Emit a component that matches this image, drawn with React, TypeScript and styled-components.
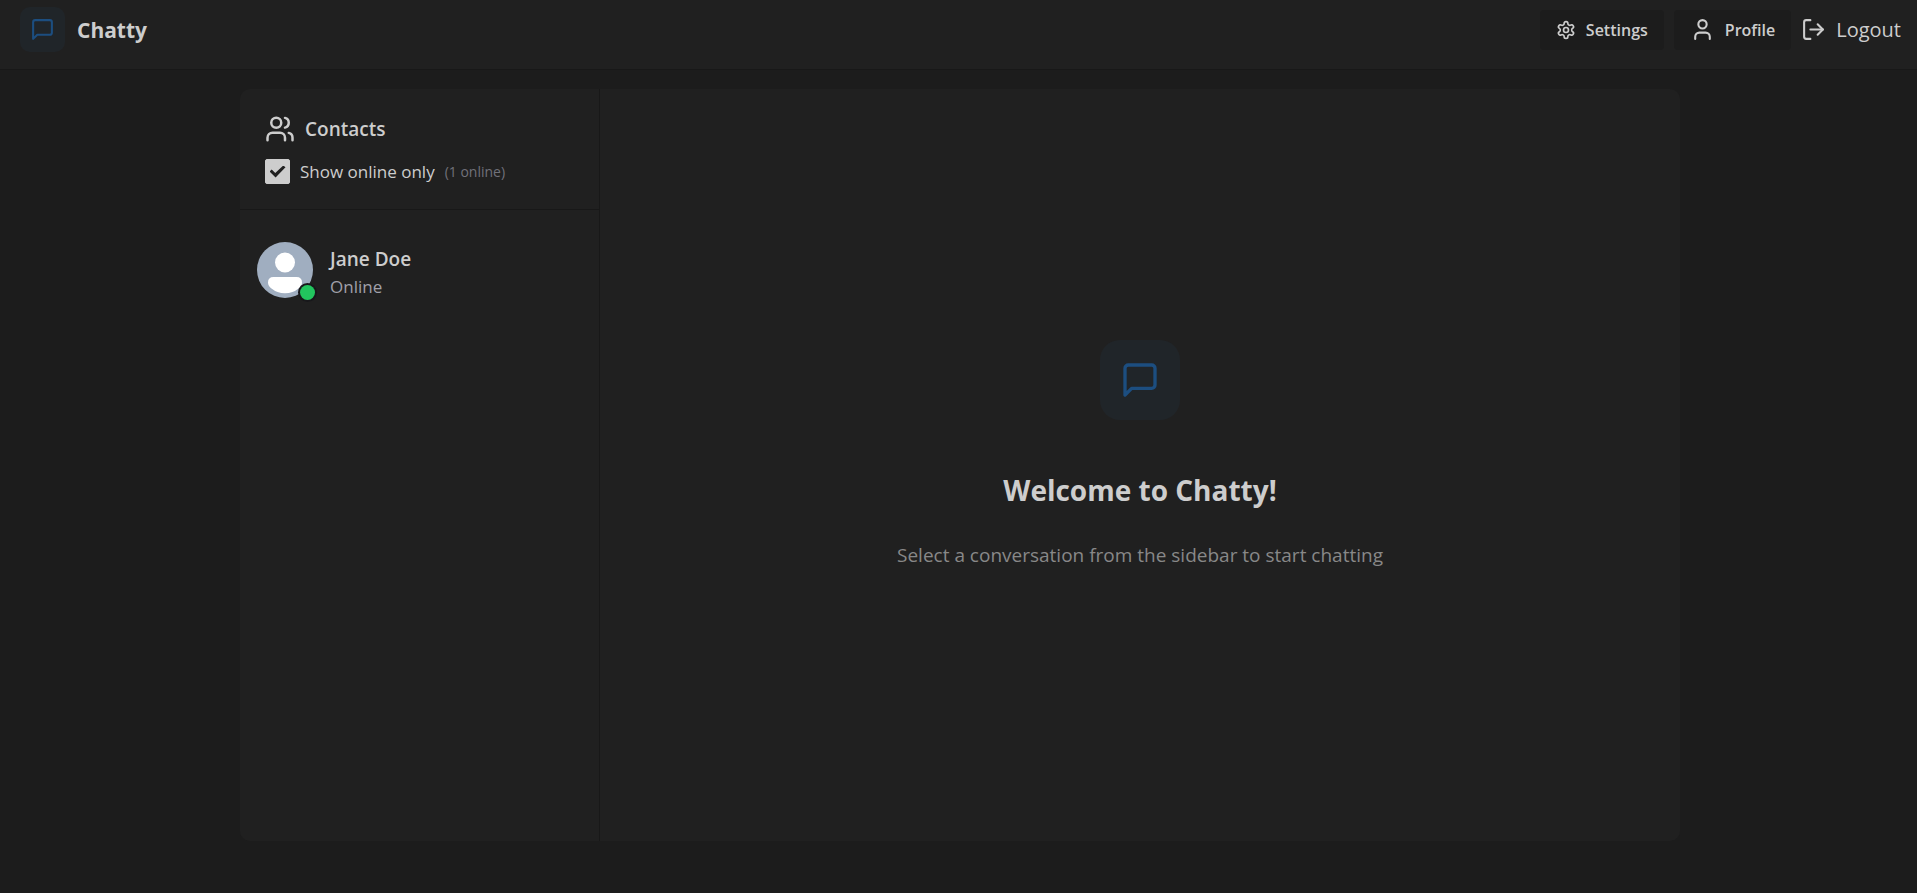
import React from "react";
import styled, { createGlobalStyle } from "styled-components";
import { LogOut, User, Users } from "lucide-react";

const color = {
  page: "#1c1c1c",
  panel: "#202020",
  line: "#181818",
  text: "#cdcdcd",
  muted: "#888888",
  faint: "#71717a",
  brand: "#1c4e80",
  brandTint: "#202529",
  online: "#22c55e",
};

const GlobalStyle = createGlobalStyle`
  *, *::before, *::after { box-sizing: border-box; }
  body {
    margin: 0;
    background: ${color.page};
    color: ${color.text};
    font-family: "Open Sans", "Noto Sans", sans-serif;
    font-size: 17px;
  }
  h1, h2, p { margin: 0; }
`;

const Page = styled.div`
  display: flex;
  flex-direction: column;
  min-height: 100vh;
`;

const Header = styled.header`
  display: flex;
  align-items: center;
  justify-content: space-between;
  padding: 7px 16px 17px 20px;
  background: ${color.panel};
  border-bottom: 1px solid ${color.line};
`;

const Brand = styled.a`
  display: flex;
  align-items: center;
  gap: 12px;
  color: inherit;
  text-decoration: none;
`;

const BrandName = styled.h1`
  font-size: 21px;
  line-height: 30px;
  font-weight: 700;
`;

const IconTile = styled.span<{ $size: number; $radius: number }>`
  display: flex;
  align-items: center;
  justify-content: center;
  width: ${(p) => p.$size}px;
  height: ${(p) => p.$size}px;
  border-radius: ${(p) => p.$radius}px;
  background: ${color.brandTint};
  color: ${color.brand};
`;

const Nav = styled.nav`
  display: flex;
  align-items: center;
  gap: 10px;
`;

const NavLink = styled.a`
  display: flex;
  align-items: center;
  gap: 10px;
  height: 40px;
  padding: 0 16px;
  border-radius: 4px;
  background: ${color.page};
  color: inherit;
  font-size: 16px;
  font-weight: 600;
  text-decoration: none;
`;

const LogoutButton = styled.button`
  display: flex;
  align-items: center;
  gap: 10px;
  padding: 0;
  border: 0;
  background: none;
  color: inherit;
  font: inherit;
  font-size: 20px;
  cursor: pointer;
`;

const Main = styled.main`
  display: flex;
  flex: 1;
  justify-content: center;
  padding: 19px 20px 52px;
`;

const ChatCard = styled.div`
  display: flex;
  width: 100%;
  max-width: 1440px;
  margin-left: 3px;
  border-radius: 10px;
  background: ${color.panel};
  overflow: hidden;
`;

const Sidebar = styled.aside`
  width: 360px;
  flex-shrink: 0;
  border-right: 1px solid ${color.line};
`;

const SidebarHead = styled.div`
  display: flex;
  flex-direction: column;
  gap: 15px;
  padding: 25px;
  border-bottom: 1px solid ${color.line};
`;

const SidebarTitle = styled.h2`
  display: flex;
  align-items: center;
  gap: 10px;
  font-size: 19px;
  line-height: 30px;
  font-weight: 600;
`;

const FilterRow = styled.div`
  display: flex;
  align-items: center;
  gap: 10px;
  line-height: 25px;
`;

const FilterLabel = styled.label`
  display: flex;
  align-items: center;
  gap: 10px;
  cursor: pointer;
`;

const Checkbox = styled.input`
  appearance: none;
  display: grid;
  place-items: center;
  width: 25px;
  height: 25px;
  margin: 0;
  border: 1px solid ${color.text};
  border-radius: 2px;

  &:checked {
    background: ${color.text};
  }
  &:checked::before {
    content: "";
    width: 16px;
    height: 12px;
    background: ${color.panel};
    clip-path: polygon(0 50%, 14% 34%, 36% 62%, 86% 0, 100% 14%, 38% 100%);
  }
`;

const OnlineCount = styled.span`
  color: ${color.faint};
  font-size: 14px;
`;

const ContactList = styled.div`
  padding: 15px 0;
`;

const ContactButton = styled.button`
  display: flex;
  align-items: center;
  gap: 15px;
  width: 100%;
  padding: 15px;
  border: 0;
  background: none;
  color: inherit;
  font: inherit;
  text-align: left;
  cursor: pointer;
`;

const AvatarBox = styled.span`
  position: relative;
  width: 60px;
  height: 60px;
`;

const StatusDot = styled.span`
  position: absolute;
  right: 0;
  bottom: 0;
  width: 15px;
  height: 15px;
  border-radius: 50%;
  background: ${color.online};
  box-shadow: 0 0 0 2px #18181b;
`;

const ContactText = styled.span`
  display: flex;
  flex-direction: column;
  padding-top: 6px;
  line-height: 27px;
`;

const ContactName = styled.span`
  font-size: 19px;
  font-weight: 600;
`;

const ContactStatus = styled.span`
  color: #a1a1aa;
  font-size: 17px;
`;

const Welcome = styled.section`
  display: flex;
  flex: 1;
  flex-direction: column;
  align-items: center;
  justify-content: center;
  padding: 20px 20px 40px;
  text-align: center;
`;

const WelcomeTitle = styled.h2`
  margin: 50px 0 30px;
  font-size: 28px;
  line-height: 40px;
  font-weight: 700;
`;

const WelcomeText = styled.p`
  color: ${color.muted};
  font-size: 19px;
  line-height: 30px;
`;

const MessageIcon = ({ size }: { size: number }) => (
  <svg width={size} height={size} viewBox="0 0 24 24" fill="none" stroke="currentColor" strokeWidth="2" strokeLinecap="round" strokeLinejoin="round" aria-hidden="true">
    <path d="M21 15a2 2 0 0 1-2 2H7l-4 4V5a2 2 0 0 1 2-2h14a2 2 0 0 1 2 2z" />
  </svg>
);

const GearIcon = () => (
  <svg width="20" height="20" viewBox="0 0 24 24" fill="none" stroke="currentColor" strokeWidth="2" strokeLinecap="round" strokeLinejoin="round" aria-hidden="true">
    <path d="M12.22 2h-.44a2 2 0 0 0-2 2v.18a2 2 0 0 1-1 1.73l-.43.25a2 2 0 0 1-2 0l-.15-.08a2 2 0 0 0-2.73.73l-.22.38a2 2 0 0 0 .73 2.73l.15.1a2 2 0 0 1 1 1.72v.51a2 2 0 0 1-1 1.74l-.15.09a2 2 0 0 0-.73 2.73l.22.38a2 2 0 0 0 2.73.73l.15-.08a2 2 0 0 1 2 0l.43.25a2 2 0 0 1 1 1.73V20a2 2 0 0 0 2 2h.44a2 2 0 0 0 2-2v-.18a2 2 0 0 1 1-1.73l.43-.25a2 2 0 0 1 2 0l.15.08a2 2 0 0 0 2.73-.73l.22-.39a2 2 0 0 0-.73-2.73l-.15-.08a2 2 0 0 1-1-1.74v-.5a2 2 0 0 1 1-1.74l.15-.09a2 2 0 0 0 .73-2.73l-.22-.38a2 2 0 0 0-2.73-.73l-.15.08a2 2 0 0 1-2 0l-.43-.25a2 2 0 0 1-1-1.73V4a2 2 0 0 0-2-2z" />
    <circle cx="12" cy="12" r="3" />
  </svg>
);

const AvatarImage = () => (
  <svg width="60" height="60" viewBox="0 0 60 60" aria-hidden="true">
    <circle cx="30" cy="30" r="28" fill="#a0aec0" />
    <circle cx="30" cy="22.5" r="10" fill="#fff" />
    <path d="M18.5 37H41.5Q47 37 47 42.5Q47 46 43.5 48.5Q38 53.2 30 53.2Q22 53.2 16.5 48.5Q13 46 13 42.5Q13 37 18.5 37Z" fill="#fff" />
  </svg>
);

export default function App() {
  const [onlineOnly, setOnlineOnly] = React.useState(true);

  return (
    <Page>
      <GlobalStyle />
      <Header>
        <Brand href="#">
          <IconTile $size={45} $radius={10}>
            <MessageIcon size={25} />
          </IconTile>
          <BrandName>Chatty</BrandName>
        </Brand>
        <Nav>
          <NavLink href="#settings">
            <GearIcon />
            Settings
          </NavLink>
          <NavLink href="#profile">
            <User size={25} />
            Profile
          </NavLink>
          <LogoutButton type="button">
            <LogOut size={25} />
            Logout
          </LogoutButton>
        </Nav>
      </Header>
      <Main>
        <ChatCard>
          <Sidebar>
            <SidebarHead>
              <SidebarTitle>
                <Users size={30} />
                Contacts
              </SidebarTitle>
              <FilterRow>
                <FilterLabel>
                  <Checkbox type="checkbox" checked={onlineOnly} onChange={(e) => setOnlineOnly(e.target.checked)} />
                  Show online only
                </FilterLabel>
                <OnlineCount>(1 online)</OnlineCount>
              </FilterRow>
            </SidebarHead>
            <ContactList>
              <ContactButton type="button">
                <AvatarBox>
                  <AvatarImage />
                  <StatusDot />
                </AvatarBox>
                <ContactText>
                  <ContactName>Jane Doe</ContactName>
                  <ContactStatus>Online</ContactStatus>
                </ContactText>
              </ContactButton>
            </ContactList>
          </Sidebar>
          <Welcome>
            <IconTile $size={80} $radius={20}>
              <MessageIcon size={40} />
            </IconTile>
            <WelcomeTitle>Welcome to Chatty!</WelcomeTitle>
            <WelcomeText>Select a conversation from the sidebar to start chatting</WelcomeText>
          </Welcome>
        </ChatCard>
      </Main>
    </Page>
  );
}
